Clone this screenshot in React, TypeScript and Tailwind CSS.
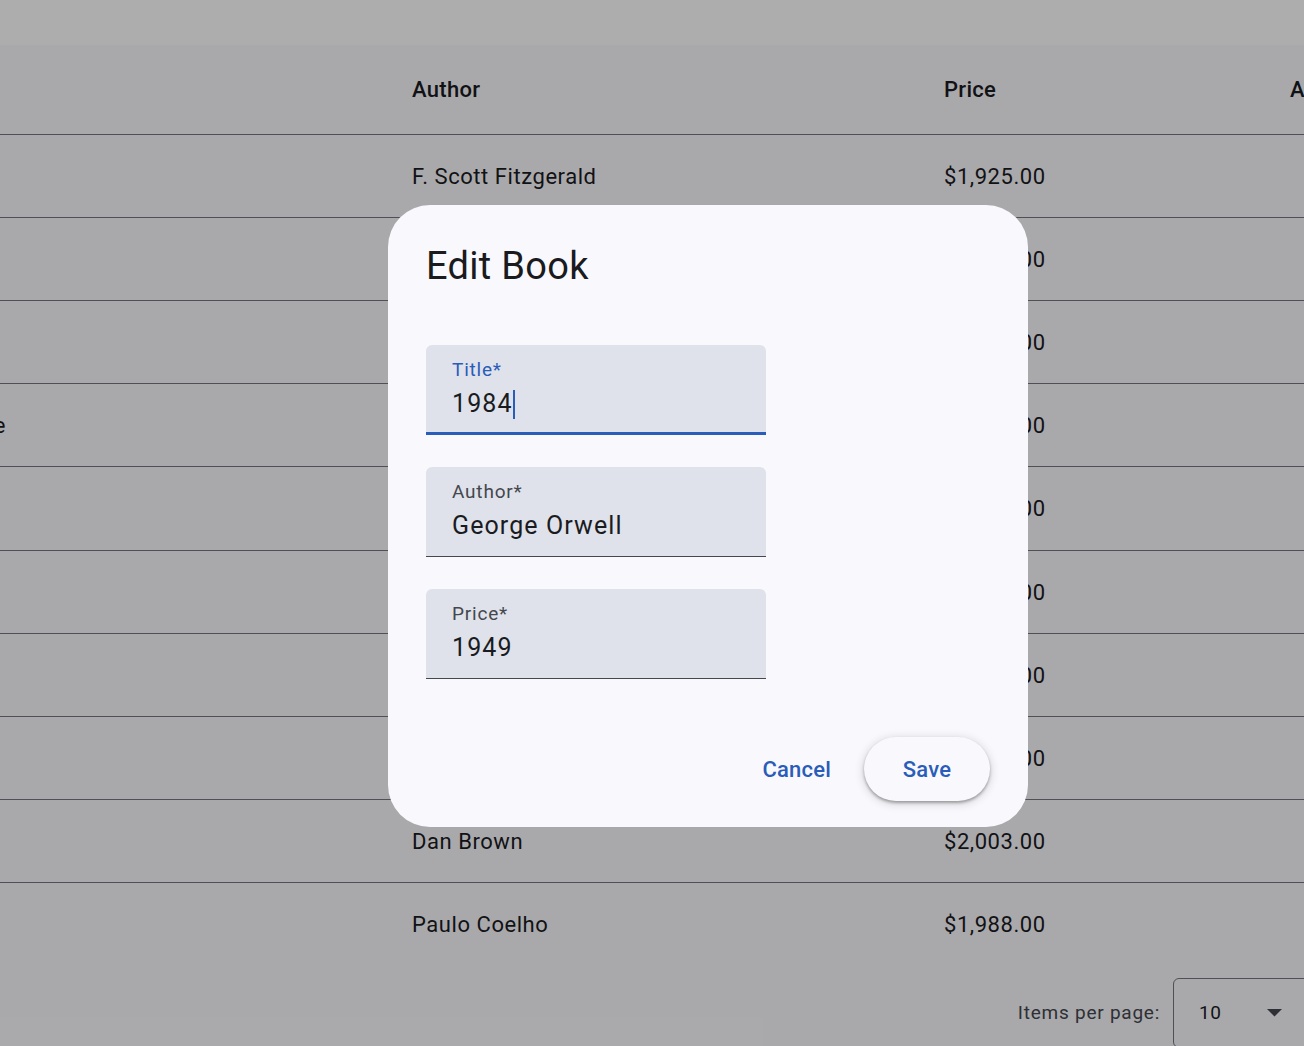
type Book = {
  title: string;
  author: string;
  price: string;
};

const books: Book[] = [
  { title: "The Great Gatsby", author: "F. Scott Fitzgerald", price: "$1,925.00" },
  { title: "To Kill a Mockingbird", author: "Harper Lee", price: "$1,960.00" },
  { title: "1984", author: "George Orwell", price: "$1,949.00" },
  { title: "The Catcher in the Rye", author: "J.D. Salinger", price: "$1,951.00" },
  { title: "Pride and Prejudice", author: "Jane Austen", price: "$1,813.00" },
  { title: "The Hobbit", author: "J.R.R. Tolkien", price: "$1,937.00" },
  { title: "Brave New World", author: "Aldous Huxley", price: "$1,932.00" },
  { title: "Moby Dick", author: "Herman Melville", price: "$1,851.00" },
  { title: "The Da Vinci Code", author: "Dan Brown", price: "$2,003.00" },
  { title: "The Alchemist", author: "Paulo Coelho", price: "$1,988.00" },
];

function Field({ label, value, focused }: { label: string; value: string; focused?: boolean }) {
  return (
    <div
      className={
        "w-[340px] h-[90px] rounded-t-[6px] bg-[#dfe2ea] px-[26px] pt-[12px] " +
        (focused ? "border-b-[3px] border-[#2a5cba]" : "border-b border-[#44474e]")
      }
    >
      <div className={"text-[19px] leading-[26px] tracking-[0.8px] " + (focused ? "text-[#2a5cba]" : "text-[#44474e]")}>
        {label}
      </div>
      <div className="mt-[2px] flex items-center text-[25px] leading-[38px] tracking-[1.1px] text-[#1a1b1f]">
        <span>{value}</span>
        {focused && <span className="w-[2px] h-[29px] bg-[#2a5cba]" />}
      </div>
    </div>
  );
}

export default function App() {
  return (
    <div className="relative w-[1304px] h-[1046px] overflow-hidden bg-[#faf9fd] font-['Roboto',sans-serif] text-[#1a1b1f]">
      <div className="h-[45px] bg-white" />

      <div className="ml-[-250px] w-[1700px]">
        <div className="flex h-[90px] items-center border-b border-[#74777f] text-[22px] font-medium tracking-[0.3px]">
          <div className="w-[637px]" />
          <div className="w-[532px] pl-[25px]">Author</div>
          <div className="w-[346px] pl-[25px]">Price</div>
          <div className="pl-[25px]">Actions</div>
        </div>
        {books.map((b, i) => (
          <div
            key={b.title}
            className={
              "flex items-center text-[22px] tracking-[0.55px] " +
              (i === 4 ? "h-[84px] " : "h-[83px] ") +
              (i < books.length - 1 ? "border-b border-[#74777f]" : "")
            }
          >
            <div className="w-[637px] pl-[25px] whitespace-nowrap">{b.title}</div>
            <div className="w-[532px] pl-[25px]">{b.author}</div>
            <div className="w-[346px] pl-[25px]">{b.price}</div>
            <div className="pl-[25px]" />
          </div>
        ))}
      </div>

      <div className="flex items-center justify-end pt-[12px] mr-[-19px]">
        <span className="mr-[13px] text-[19px] tracking-[0.75px] text-[#44474e]">Items per page:</span>
        <div className="flex h-[70px] w-[150px] items-center rounded-[6px] border border-[#74777f] pl-[25px] pr-[10px]">
          <span className="text-[19px] tracking-[0.6px]">10</span>
          <svg className="ml-[45px]" width="15" height="8" viewBox="0 0 15 8">
            <path d="M0 0 L15 0 L7.5 7.5 Z" fill="#44474e" />
          </svg>
        </div>
      </div>

      <div className="absolute inset-0 bg-black/[0.32]" />

      <div className="absolute left-[388px] top-[205px] w-[640px] h-[622px] rounded-[42px] bg-[#f9f9fd] flex flex-col">
        <h2 className="pl-[38px] pt-[36px] text-[38px] leading-[50px] tracking-[0.3px] text-[#1a1b1f]">Edit Book</h2>
        <div className="mt-[54px] ml-[38px] flex flex-col gap-[32px]">
          <Field label="Title*" value="1984" focused />
          <Field label="Author*" value="George Orwell" />
          <Field label="Price*" value="1949" />
        </div>
        <div className="mt-auto mb-[26px] mr-[38px] flex items-center justify-end gap-[14px]">
          <button className="h-[64px] px-[19px] rounded-full text-[22px] font-medium tracking-[0.2px] text-[#2a5cba]">
            Cancel
          </button>
          <button className="h-[64px] w-[126px] rounded-full bg-[#f9f9fd] text-[22px] font-medium tracking-[0.2px] text-[#2a5cba] shadow-[0_2px_3px_rgba(0,0,0,0.3),0_2px_8px_2px_rgba(0,0,0,0.12)]">
            Save
          </button>
        </div>
      </div>
    </div>
  );
}
